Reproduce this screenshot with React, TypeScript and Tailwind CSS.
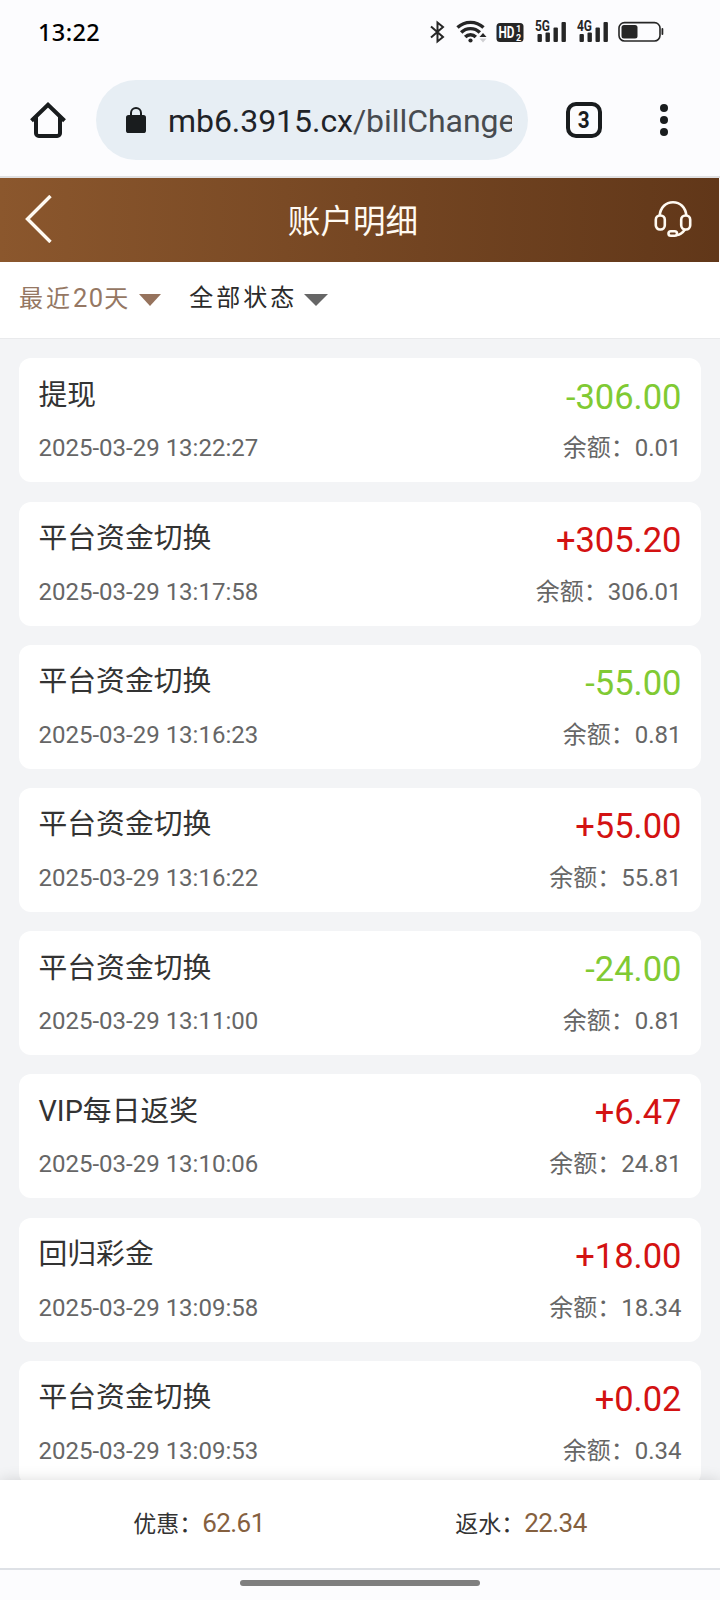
import React from 'react';

interface BillRecord {
  title: string;
  time: string;
  amount: string;
  balance: string;
}

const records: BillRecord[] = [
  { title: '提现', time: '2025-03-29 13:22:27', amount: '-306.00', balance: '0.01' },
  { title: '平台资金切换', time: '2025-03-29 13:17:58', amount: '+305.20', balance: '306.01' },
  { title: '平台资金切换', time: '2025-03-29 13:16:23', amount: '-55.00', balance: '0.81' },
  { title: '平台资金切换', time: '2025-03-29 13:16:22', amount: '+55.00', balance: '55.81' },
  { title: '平台资金切换', time: '2025-03-29 13:11:00', amount: '-24.00', balance: '0.81' },
  { title: 'VIP每日返奖', time: '2025-03-29 13:10:06', amount: '+6.47', balance: '24.81' },
  { title: '回归彩金', time: '2025-03-29 13:09:58', amount: '+18.00', balance: '18.34' },
  { title: '平台资金切换', time: '2025-03-29 13:09:53', amount: '+0.02', balance: '0.34' },
];

const SignalIcon: React.FC<{ label: string }> = ({ label }) => (
  <svg width="32" height="24" viewBox="0 0 32 24" fill="#262626" className="overflow-visible">
    <text x="0" y="11" fontSize="14" fontWeight="700" textLength="15" lengthAdjust="spacingAndGlyphs">
      {label}
    </text>
    <rect x="2.5" y="14" width="4.4" height="8" rx="1" />
    <rect x="10.5" y="12.5" width="4.4" height="9.5" rx="1" />
    <rect x="18.5" y="7.5" width="4.4" height="14.5" rx="1" />
    <rect x="26.5" y="2" width="4.4" height="20" rx="1" />
  </svg>
);

const StatusBar: React.FC = () => (
  <div className="flex h-16 items-center justify-between pl-[38px] pr-[56px]">
    <span className="mt-0.5 font-['Noto_Sans',sans-serif] text-[23.5px] font-medium leading-none tracking-[0.4px] text-black">13:22</span>
    <div className="flex items-center">
      <svg width="16" height="24" viewBox="0 0 16 24" fill="none" stroke="#262626" strokeWidth="2" className="mr-[10px]">
        <path d="M1 6.5 13 17 7.5 21.5V2.5L13 7 1 17.5" />
      </svg>
      <svg width="32" height="24" viewBox="0 0 32 24" fill="none" stroke="#262626" strokeWidth="3.4" className="mr-[8px]">
        <path d="M1.5 7.5a19 19 0 0 1 26 0" />
        <path d="M5.2 12.5a13 13 0 0 1 18.6 0" />
        <path d="M9.2 17a7.4 7.4 0 0 1 10.6 0" />
        <circle cx="14.5" cy="20.5" r="2.1" fill="#262626" stroke="none" />
        <path d="m23.5 17 3.5-4 3.5 4z" fill="#262626" stroke="none" />
        <path d="m23.5 18.5 3.5 4 3.5-4z" fill="#cfcfd2" stroke="none" />
      </svg>
      <svg width="28" height="24" viewBox="0 0 28 24" className="mr-[11px]">
        <rect x="0.5" y="3" width="27" height="19" rx="3.5" fill="#262626" />
        <g fill="#fff" fontWeight="700">
          <text x="2.5" y="18.3" fontSize="16" textLength="16" lengthAdjust="spacingAndGlyphs">HD</text>
          <text x="20" y="11.6" fontSize="9">1</text>
          <text x="20" y="20.6" fontSize="9">2</text>
        </g>
      </svg>
      <div className="mr-[10px]"><SignalIcon label="5G" /></div>
      <div className="mr-[9px]"><SignalIcon label="4G" /></div>
      <svg width="46" height="24" viewBox="0 0 46 24">
        <rect x="1" y="2.6" width="41" height="18.4" rx="5.5" fill="none" stroke="#262626" strokeWidth="1.6" />
        <rect x="3.5" y="5" width="16" height="13.6" rx="2.5" fill="#262626" />
        <rect x="43.5" y="8" width="1.8" height="7" rx="0.9" fill="#262626" />
      </svg>
    </div>
  </div>
);

const BrowserBar: React.FC = () => (
  <div className="flex h-28 items-center">
    <svg width="36" height="36" viewBox="0 0 36 36" fill="none" stroke="#191c1e" strokeWidth="4" className="ml-[30px]">
      <path d="M1.5 18.8 18 2.8l16.5 16" />
      <path d="M6 15v16.2a2.8 2.8 0 0 0 2.8 2.8h18.4a2.8 2.8 0 0 0 2.8-2.8V15" />
    </svg>
    <div className="ml-[30px] flex h-20 w-[432px] items-center rounded-full bg-[#e7eef4] pl-[30px] pr-4">
      <svg width="20" height="28" viewBox="0 0 20 28" className="shrink-0">
        <path d="M5 11V7a5 5 0 0 1 10 0v4" fill="none" stroke="#191c1e" strokeWidth="2" />
        <rect x="0" y="9" width="20" height="18" rx="2.6" fill="#191c1e" />
      </svg>
      <div className="ml-[22px] mt-0.5 flex-1 overflow-hidden whitespace-nowrap text-[32px] leading-[42px] tracking-[-0.05px] text-[#1f2328]">
        mb6.3915.cx<span className="text-[#474b50]">/billChange</span>
      </div>
    </div>
    <div className="ml-[38px] flex size-9 items-center justify-center rounded-[10px] border-4 border-[#191c1e] text-[23px] font-bold leading-none text-[#191c1e]">
      <span className="scale-x-90">3</span>
    </div>
    <div className="ml-[58px] flex flex-col gap-1">
      <span className="size-2 rounded-full bg-[#191c1e]" />
      <span className="size-2 rounded-full bg-[#191c1e]" />
      <span className="size-2 rounded-full bg-[#191c1e]" />
    </div>
  </div>
);

const PageHeader: React.FC = () => (
  <header className="mr-px flex h-[84px] items-center justify-between bg-linear-to-r from-[#8b572d] to-[#613719] pl-[25px] pr-[27px]">
    <svg width="38" height="48" viewBox="0 0 38 48" fill="none" stroke="#fffaf2" strokeWidth="3.4" className="mb-[3px]">
      <path d="M25.5 1 2.5 24l23 23" />
    </svg>
    <h1 className="mr-[11px] mt-[4px] text-[32.6px] leading-none text-[#fffaf2]">账户明细</h1>
    <svg width="38" height="38" viewBox="0 0 38 38" fill="none" stroke="#fffaf2" strokeWidth="2.6" className="mb-0.5">
      <path d="M5.5 16C6.5 7 12 2.2 19 2.2S31.5 7 32.5 16" />
      <rect x="1.8" y="15.5" width="9" height="14" rx="4.2" />
      <rect x="27.2" y="15.5" width="9" height="14" rx="4.2" />
      <rect x="14.5" y="31.2" width="8.5" height="4.6" rx="2.3" />
      <path d="M22.5 35c3.5 0 6-2 8.5-5.5" />
    </svg>
  </header>
);

const FilterBar: React.FC = () => (
  <div className="flex h-[77px] items-start border-b border-[#e9eaec] bg-white pl-[19px] pt-5 text-[24px] leading-[33px] tracking-[3px]">
    <button className="flex items-center text-[#957763]">
      <span>最近<span className="text-[25.5px] tracking-[1.3px]">20</span>天</span>
      <svg width="22" height="12" viewBox="0 0 22 12" fill="#96735d" className="ml-[8px] mt-0.5"><path d="M0 0h22L11 12z" /></svg>
    </button>
    <button className="ml-[28px] flex items-center text-[#2b2b2b]">
      全部状态
      <svg width="24" height="12" viewBox="0 0 24 12" fill="#666" className="ml-[7px] mt-0.5"><path d="M0 0h24L12 12z" /></svg>
    </button>
  </div>
);

const RecordCard: React.FC<{ record: BillRecord }> = ({ record }) => {
  const isIncome = record.amount.startsWith('+');

  return (
    <li className="flex h-[124px] shrink-0 flex-col rounded-xl bg-white px-[19.5px] pt-[17px]">
      <div className="flex h-10 items-center justify-between">
        <span className="text-[28.8px] text-[#333]">{record.title}</span>
        <span className={isIncome ? 'pt-1 text-[34.5px] text-[#d31212]' : 'pt-1 text-[34.5px] text-[#80ca33]'}>{record.amount}</span>
      </div>
      <div className="mt-[17px] flex h-8 items-center justify-between text-[24px] text-[#666]">
        <span>{record.time}</span>
        <span>余额：{record.balance}</span>
      </div>
    </li>
  );
};

const SummaryItem: React.FC<{ label: string; value: string }> = ({ label, value }) => (
  <div className="flex flex-1 items-center justify-center pt-0.5 text-[23px] text-[#333]">
    {label}：<span className="pb-[3px] text-[26px] tracking-[-0.6px] text-[#85603f]">{value}</span>
  </div>
);

const App: React.FC = () => (
  <div className="flex h-[1600px] w-[720px] flex-col overflow-hidden bg-[#fcfcfe] font-[Roboto,'Noto_Sans_CJK_SC',sans-serif]">
    <StatusBar />
    <BrowserBar />
    <div className="h-0.5 shrink-0 bg-[#e0e0e2]" />
    <PageHeader />
    <FilterBar />
    <ul className="flex min-h-0 flex-1 flex-col gap-[19.2px] overflow-hidden bg-[#f3f4f6] px-[19px] pt-[19.4px]">
      {records.map(record => (
        <RecordCard key={record.time} record={record} />
      ))}
    </ul>
    <footer className="relative flex h-[88px] shrink-0 bg-white px-[38px] shadow-[0_0_14px_rgba(0,0,0,0.14)]">
      <SummaryItem label="优惠" value="62.61" />
      <SummaryItem label="返水" value="22.34" />
    </footer>
    <div className="relative flex h-8 shrink-0 justify-center border-t-2 border-[#dee1e6] bg-[#fcfcfe] pt-2.5">
      <span className="h-1.5 w-60 rounded-full bg-[#7f7f7f]" />
    </div>
  </div>
);

export default App;
